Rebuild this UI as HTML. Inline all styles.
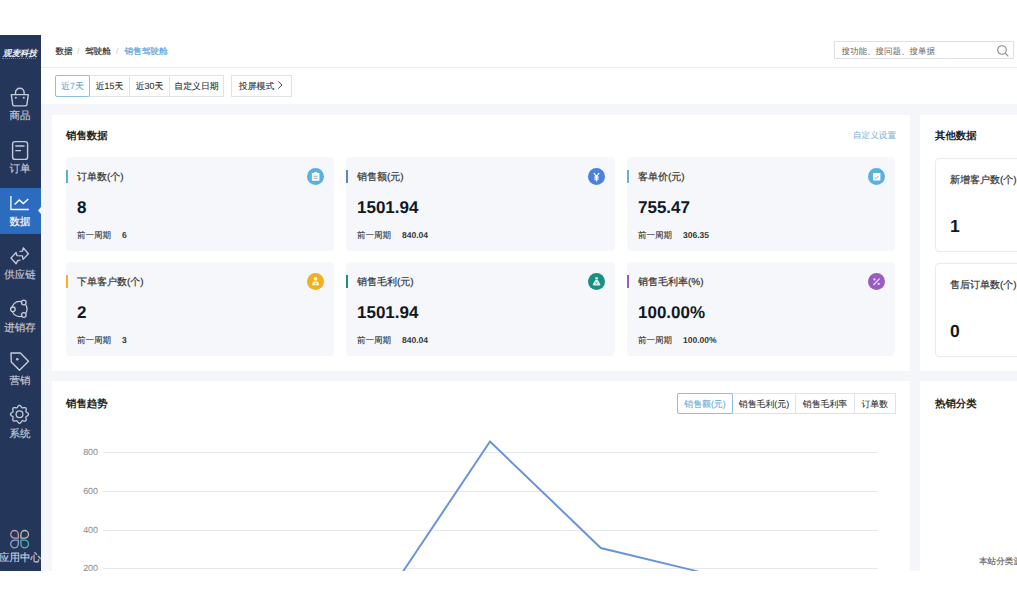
<!DOCTYPE html>
<html><head><meta charset="utf-8">
<style>
*{box-sizing:border-box;margin:0;padding:0}
html,body{width:1017px;height:606px;overflow:hidden;background:#fff;font-family:"Liberation Sans",sans-serif;color:#333;text-rendering:geometricPrecision}
body{position:relative}
div,span,svg{position:absolute}
.t{white-space:nowrap}
.sk{-webkit-text-stroke:0.2px currentColor}
#bg{left:41px;top:35px;width:976px;height:536px;background:#f4f6f9}
#side{left:0;top:35px;width:41px;height:535.5px;background:#243659}
.nav{left:-0.5px;width:41px;text-align:center;color:#c5cbd8;font-size:10.5px;line-height:12px;-webkit-text-stroke:0.15px currentColor}
#hdr{left:41px;top:35px;width:976px;height:33px;background:#fff;border-bottom:1px solid #ebedf0}
#bar{left:41px;top:68px;width:976px;height:36px;background:#fff}
.card{background:#fff}
.stat{background:#f6f7fa;border-radius:4px;height:94px}
.stat .b{left:0;top:12.5px;width:2px;height:13px}
.stat .l{left:11px;top:14px;font-size:10px;line-height:13px;color:#333;-webkit-text-stroke:0.2px #333}
.stat .v{left:11px;top:41px;font-size:17px;line-height:20px;font-weight:bold;color:#111827}
.stat .p{left:11px;top:71.5px;font-size:8.5px;line-height:12px;color:#333;-webkit-text-stroke:0.12px #333}
.stat .pv{left:56px;top:71.5px;font-size:8.5px;line-height:12px;color:#333;font-weight:bold}
.stat .ic{right:10px;top:11px;width:17px;height:17px;border-radius:50%}
.ttl{font-size:10.4px;font-weight:bold;color:#222;line-height:13px}
.btn{height:21px;border:1px solid #dfe2e8;background:#fff;font-size:8.9px;line-height:20px;text-align:center;color:#333;-webkit-text-stroke:0.1px currentColor}
.ocard{background:#fff;border:1px solid #e8eaee;border-radius:4px;height:93.5px;width:100px}
.ocard .l{left:14px;top:15px;font-size:10px;line-height:13px;color:#333;-webkit-text-stroke:0.2px #333}
.ocard .v{left:14px;top:57px;font-size:17.5px;line-height:20px;font-weight:bold;color:#111827}
.yl{font-size:8.9px;color:#888;line-height:10px;text-align:right;width:40px;left:58px}
.gl{left:103px;width:775px;height:1px;background:#e6e8eb}
</style></head><body>
<div id="bg"></div>
<div id="side">
 <div class="t" style="left:0px;top:12.5px;width:40px;text-align:center;color:#e8ecf3;font-size:8.6px;line-height:11px;font-style:italic;font-weight:bold;letter-spacing:0px">观麦科技</div>
 <div style="left:1.5px;top:22.5px;width:34px;height:1px;border-top:1px dotted #6f7c98"></div>
 <svg style="left:0;top:50px" width="41" height="28" viewBox="0 0 41 28">
  <g fill="none" stroke="#c5cbd8" stroke-width="1.4" stroke-linejoin="round">
   <path d="M15.5 9.5 V7.5 a4.3 4.3 0 0 1 8.6 0 V9.5"/>
   <path d="M11.3 9.6 H28.3 L26.9 19.6 a1.6 1.6 0 0 1 -1.6 1.3 H14.3 a1.6 1.6 0 0 1 -1.6 -1.3 Z"/>
  </g>
  <circle cx="15.8" cy="12.8" r="1" fill="#c5cbd8"/><circle cx="23.8" cy="12.8" r="1" fill="#c5cbd8"/>
 </svg>
 <div class="nav t" style="top:75px">商品</div>
 <svg style="left:0;top:104px" width="41" height="24" viewBox="0 0 41 24">
  <g fill="none" stroke="#c5cbd8" stroke-width="1.4">
   <rect x="12.6" y="2.6" width="15" height="17.8" rx="2.5"/>
   <path d="M15.3 7 H24.5 M15.3 11.6 H21"/>
  </g>
 </svg>
 <div class="nav t" style="top:127.5px">订单</div>
 <div style="left:0;top:153px;width:41px;height:46px;background:#2b6cbf"></div>
 <svg style="left:0;top:153px" width="41" height="46" viewBox="0 0 41 46">
  <g fill="none" stroke="#fff" stroke-width="1.3">
   <path d="M10.9 8 V21.5 H28.8"/>
   <path d="M14.6 16.5 L19.3 12 L23.3 15.6 L28.3 11"/>
  </g>
  <path d="M41 19 L38 22.5 L41 26 Z" fill="#fff"/>
 </svg>
 <div class="nav t" style="top:180.5px;color:#fff">数据</div>
 <svg style="left:0;top:205px" width="41" height="28" viewBox="0 0 41 28">
  <path d="M20 11.3 L22.5 11.1 L23.2 7.8 L28.4 13.7 L23 19.4 L22.5 15.9 L16.9 15.7 L16.1 12.5 L11 18 L16.1 23.8 L17.7 20.6 L19.9 20.2" fill="none" stroke="#c5cbd8" stroke-width="1.3" stroke-linejoin="round" stroke-linecap="round"/>
 </svg>
 <div class="nav t" style="top:233.5px">供应链</div>
 <svg style="left:0;top:258px" width="41" height="28" viewBox="0 0 41 28">
  <g fill="none" stroke="#c5cbd8" stroke-width="1.3">
   <circle cx="19.5" cy="16" r="7.6"/>
  </g>
  <g fill="#243659" stroke="#c5cbd8" stroke-width="1.3">
   <circle cx="23.8" cy="9.5" r="2.3"/><circle cx="12.9" cy="16.3" r="2.3"/><circle cx="23.8" cy="22" r="2.3"/>
  </g>
 </svg>
 <div class="nav t" style="top:286.5px">进销存</div>
 <svg style="left:0;top:312px" width="41" height="28" viewBox="0 0 41 28">
  <g fill="none" stroke="#c5cbd8" stroke-width="1.4" stroke-linejoin="round">
   <path d="M11 6 H20.3 L28.5 14.3 L19.5 23.2 L11.3 15 Z"/>
  </g>
  <circle cx="17.3" cy="12.3" r="1.2" fill="#c5cbd8"/>
 </svg>
 <div class="nav t" style="top:340px">营销</div>
 <svg style="left:0;top:365px" width="41" height="28" viewBox="0 0 41 28">
  <g fill="none" stroke="#c5cbd8" stroke-width="1.3">
   <path d="M28.50 14.30 L28.44 14.65 L28.28 14.99 L28.03 15.31 L27.71 15.60 L27.35 15.86 L26.98 16.10 L26.63 16.31 L26.34 16.52 L26.11 16.74 L25.97 16.98 L25.90 17.25 L25.91 17.56 L25.97 17.92 L26.06 18.32 L26.15 18.74 L26.22 19.18 L26.24 19.62 L26.20 20.02 L26.07 20.38 L25.86 20.66 L25.58 20.87 L25.22 21.00 L24.82 21.04 L24.38 21.02 L23.94 20.95 L23.52 20.86 L23.12 20.77 L22.76 20.71 L22.45 20.70 L22.18 20.77 L21.94 20.91 L21.72 21.14 L21.51 21.43 L21.30 21.78 L21.06 22.15 L20.80 22.51 L20.51 22.83 L20.19 23.08 L19.85 23.24 L19.50 23.30 L19.15 23.24 L18.81 23.08 L18.49 22.83 L18.20 22.51 L17.94 22.15 L17.70 21.78 L17.49 21.43 L17.28 21.14 L17.06 20.91 L16.82 20.77 L16.55 20.70 L16.24 20.71 L15.88 20.77 L15.48 20.86 L15.06 20.95 L14.62 21.02 L14.18 21.04 L13.78 21.00 L13.42 20.87 L13.14 20.66 L12.93 20.38 L12.80 20.02 L12.76 19.62 L12.78 19.18 L12.85 18.74 L12.94 18.32 L13.03 17.92 L13.09 17.56 L13.10 17.25 L13.03 16.98 L12.89 16.74 L12.66 16.52 L12.37 16.31 L12.02 16.10 L11.65 15.86 L11.29 15.60 L10.97 15.31 L10.72 14.99 L10.56 14.65 L10.50 14.30 L10.56 13.95 L10.72 13.61 L10.97 13.29 L11.29 13.00 L11.65 12.74 L12.02 12.50 L12.37 12.29 L12.66 12.08 L12.89 11.86 L13.03 11.62 L13.10 11.35 L13.09 11.04 L13.03 10.68 L12.94 10.28 L12.85 9.86 L12.78 9.42 L12.76 8.98 L12.80 8.58 L12.93 8.22 L13.14 7.94 L13.42 7.73 L13.78 7.60 L14.18 7.56 L14.62 7.58 L15.06 7.65 L15.48 7.74 L15.88 7.83 L16.24 7.89 L16.55 7.90 L16.82 7.83 L17.06 7.69 L17.28 7.46 L17.49 7.17 L17.70 6.82 L17.94 6.45 L18.20 6.09 L18.49 5.77 L18.81 5.52 L19.15 5.36 L19.50 5.30 L19.85 5.36 L20.19 5.52 L20.51 5.77 L20.80 6.09 L21.06 6.45 L21.30 6.82 L21.51 7.17 L21.72 7.46 L21.94 7.69 L22.18 7.83 L22.45 7.90 L22.76 7.89 L23.12 7.83 L23.52 7.74 L23.94 7.65 L24.38 7.58 L24.82 7.56 L25.22 7.60 L25.58 7.73 L25.86 7.94 L26.07 8.22 L26.20 8.58 L26.24 8.98 L26.22 9.42 L26.15 9.86 L26.06 10.28 L25.97 10.68 L25.91 11.04 L25.90 11.35 L25.97 11.62 L26.11 11.86 L26.34 12.08 L26.63 12.29 L26.98 12.50 L27.35 12.74 L27.71 13.00 L28.03 13.29 L28.28 13.61 L28.44 13.95 L28.50 14.30Z"/>
   <circle cx="19.5" cy="14.3" r="3.4"/>
  </g>
 </svg>
 <div class="nav t" style="top:393px">系统</div>
 <svg style="left:0;top:490px" width="41" height="28" viewBox="0 0 41 28">
  <g fill="none" stroke-width="1.3" stroke-linejoin="round">
   <path d="M18.30 9.30 A3.8 3.8 0 1 0 14.50 13.10 L18.30 13.10 Z" stroke="#c49aa8"/>
   <path d="M20.90 9.30 A3.8 3.8 0 1 1 24.70 13.10 L20.90 13.10 Z" stroke="#b9c0ad"/>
   <path d="M18.30 19.00 A3.8 3.8 0 1 1 14.50 15.20 L18.30 15.20 Z" stroke="#8aa6d8"/>
   <path d="M20.90 19.00 A3.8 3.8 0 1 0 24.70 15.20 L20.90 15.20 Z" stroke="#56b6b4"/>
  </g>
 </svg>
 <div class="nav t" style="top:517px;left:-3.5px;width:47px;color:#d0d5e0">应用中心</div>
</div>
<div id="hdr">
 <div class="t sk" style="left:14.5px;top:10px;font-size:8.6px;line-height:12px;color:#333">数据</div>
 <div class="t" style="left:36px;top:10px;font-size:8.6px;line-height:12px;color:#c8ccd2">/</div>
 <div class="t sk" style="left:44px;top:10px;font-size:8.6px;line-height:12px;color:#333">驾驶舱</div>
 <div class="t" style="left:75px;top:10px;font-size:8.6px;line-height:12px;color:#c8ccd2">/</div>
 <div class="t sk" style="left:83.5px;top:10px;font-size:8.6px;line-height:12px;color:#62a3d8">销售驾驶舱</div>
 <div style="left:793px;top:6px;width:179.5px;height:18px;border:1px solid #dcdfe6;background:#fff"></div>
 <div class="t" style="left:800.5px;top:9.5px;font-size:8.5px;line-height:12px;color:#666">搜功能、搜问题、搜单据</div>
 <svg style="left:955px;top:8.5px" width="14" height="14" viewBox="0 0 14 14"><g fill="none" stroke="#888" stroke-width="1.1"><circle cx="6" cy="6" r="4.3"/><path d="M9.2 9.2 L12.3 12.3"/></g></svg>
</div>
<div id="bar">
 <div class="btn t" style="left:14px;top:7px;height:21.5px;line-height:20px;width:35px;border-color:#8cbfdf;color:#6ea8d4;z-index:2;border-radius:2px">近7天</div>
 <div class="btn t" style="left:48px;top:7px;height:21.5px;line-height:20px;width:41px">近15天</div>
 <div class="btn t" style="left:88px;top:7px;height:21.5px;line-height:20px;width:41px">近30天</div>
 <div class="btn t" style="left:128px;top:7px;height:21.5px;line-height:20px;width:55px">自定义日期</div>
 <div class="btn t" style="left:190px;top:7px;height:21.5px;line-height:20px;width:61px"><span style="position:static;margin-right:10px">投屏模式</span><svg style="left:44px;top:4px" width="8" height="10" viewBox="0 0 8 10"><path d="M2.3 1.5 L6 5 L2.3 8.5" fill="none" stroke="#444" stroke-width="1"/></svg></div>
</div>

<!-- main card -->
<div class="card" style="left:52px;top:115px;width:858px;height:255.5px"></div>
<div class="card" style="left:920px;top:115px;width:120px;height:255.5px"></div>
<div class="card" style="left:52px;top:381px;width:858px;height:230px"></div>
<div class="card" style="left:920px;top:381px;width:120px;height:230px"></div>

<div class="ttl t" style="left:66px;top:129.5px">销售数据</div>
<div class="t" style="left:853px;top:128.5px;font-size:8.6px;line-height:12px;color:#78acd0">自定义设置</div>

<div class="stat" style="left:66px;top:157px;width:268px">
 <div class="b" style="background:#5ab0dc"></div>
 <div class="l t">订单数(个)</div>
 <div class="v t">8</div>
 <div class="p t">前一周期</div><div class="pv t">6</div>
 <div class="ic" style="background:#5ab0e0"><svg style="left:0;top:0" width="17" height="17" viewBox="0 0 17 17"><rect x="4.9" y="4.9" width="7.5" height="7.9" rx="0.6" fill="#fff"/><rect x="7.1" y="4" width="3.1" height="1.5" rx="0.4" fill="#fff"/><path d="M6.6 8.2 H10.7 M6.6 10.3 H10.7" stroke="#8aa4b4" stroke-width="0.9"/></svg></div>
</div>
<div class="stat" style="left:346px;top:157px;width:269px">
 <div class="b" style="background:#5a84c8"></div>
 <div class="l t">销售额(元)</div>
 <div class="v t">1501.94</div>
 <div class="p t">前一周期</div><div class="pv t">840.04</div>
 <div class="ic" style="background:#4a80e0"><svg style="left:0;top:0" width="17" height="17" viewBox="0 0 17 17"><path d="M5.9 5 L8.5 8.6 L11.1 5 M8.5 8.6 V13.4 M6.3 9.2 H10.7 M6.3 11.2 H10.7" fill="none" stroke="#fff" stroke-width="1.25"/></svg></div>
</div>
<div class="stat" style="left:627px;top:157px;width:268px">
 <div class="b" style="background:#6ab0d0"></div>
 <div class="l t">客单价(元)</div>
 <div class="v t">755.47</div>
 <div class="p t">前一周期</div><div class="pv t">306.35</div>
 <div class="ic" style="background:#5ab0e0"><svg style="left:0;top:0" width="17" height="17" viewBox="0 0 17 17"><rect x="5" y="5" width="7.4" height="7.4" rx="0.6" fill="#fff"/><path d="M6.8 9.6 L8 10.7 L10.5 7.9" fill="none" stroke="#8aa4b0" stroke-width="0.9"/></svg></div>
</div>
<div class="stat" style="left:66px;top:262px;width:268px">
 <div class="b" style="background:#f0b323"></div>
 <div class="l t">下单客户数(个)</div>
 <div class="v t">2</div>
 <div class="p t">前一周期</div><div class="pv t">3</div>
 <div class="ic" style="background:#f0b020"><svg style="left:0;top:0" width="17" height="17" viewBox="0 0 17 17"><circle cx="8.6" cy="5.9" r="1.8" fill="#fff3c8"/><path d="M4.9 12.3 L5.8 9.4 Q6.3 8.6 7.3 8.6 H9.9 Q10.9 8.6 11.4 9.4 L12.3 12.3 Z" fill="#fff3c8"/><path d="M7.8 10.6 H9.4" stroke="#c0a050" stroke-width="0.7"/></svg></div>
</div>
<div class="stat" style="left:346px;top:262px;width:269px">
 <div class="b" style="background:#1a9080"></div>
 <div class="l t">销售毛利(元)</div>
 <div class="v t">1501.94</div>
 <div class="p t">前一周期</div><div class="pv t">840.04</div>
 <div class="ic" style="background:#1a9080"><svg style="left:0;top:0" width="17" height="17" viewBox="0 0 17 17"><rect x="7.2" y="4.2" width="2.8" height="1.8" rx="0.4" fill="#d8f4ee"/><path d="M7.6 6.4 H9.6 L12.4 11.6 Q12.6 12.6 11.6 12.6 H5.6 Q4.6 12.6 4.8 11.6 Z" fill="#d8f4ee"/><path d="M7.6 9.4 L9.4 11 M9.4 9.4 L7.6 11" stroke="#508878" stroke-width="0.7"/></svg></div>
</div>
<div class="stat" style="left:627px;top:262px;width:268px">
 <div class="b" style="background:#9a5cc0"></div>
 <div class="l t">销售毛利率(%)</div>
 <div class="v t">100.00%</div>
 <div class="p t">前一周期</div><div class="pv t">100.00%</div>
 <div class="ic" style="background:#9a5cc0"><svg style="left:0;top:0" width="17" height="17" viewBox="0 0 17 17"><circle cx="6.4" cy="6.4" r="1.1" fill="#f4e0ff"/><circle cx="10.6" cy="10.9" r="1.1" fill="#f4e0ff"/><path d="M11.6 5.6 L5.4 12" stroke="#f4e0ff" stroke-width="1.1"/></svg></div>
</div>

<div class="ttl t" style="left:935px;top:129.5px">其他数据</div>
<div class="ocard" style="left:935px;top:158px"><div class="l t">新增客户数(个)</div><div class="v t">1</div></div>
<div class="ocard" style="left:935px;top:263px"><div class="l t">售后订单数(个)</div><div class="v t">0</div></div>

<div class="ttl t" style="left:66px;top:398px">销售趋势</div>
<div class="ttl t" style="left:935px;top:398px">热销分类</div>
<div class="t sk" style="left:979px;top:554.5px;font-size:8.6px;line-height:12px;color:#666">本站分类源</div>

<div class="btn t" style="left:677px;top:392.5px;height:21.5px;width:56px;border-color:#8cbfdf;color:#6ea8d4;z-index:2;border-radius:2px">销售额(元)</div>
<div class="btn t" style="left:732px;top:392.5px;height:21.5px;width:64px">销售毛利(元)</div>
<div class="btn t" style="left:795px;top:392.5px;height:21.5px;width:60px">销售毛利率</div>
<div class="btn t" style="left:854px;top:392.5px;height:21.5px;width:41.5px">订单数</div>
<div class="yl" style="top:447px">800</div>
<div class="yl" style="top:486px">600</div>
<div class="yl" style="top:525px">400</div>
<div class="yl" style="top:563px">200</div>
<div class="gl" style="top:452px"></div>
<div class="gl" style="top:491px"></div>
<div class="gl" style="top:530px"></div>
<div class="gl" style="top:568px"></div>
<svg style="left:0;top:0" width="1017" height="606"><polyline points="340,665 404.2,569.8 490,441.5 600.8,548 693.6,570.4 800,600" fill="none" stroke="#6a94d8" stroke-width="2" stroke-linejoin="miter"/></svg>

<!-- white letterbox -->
<div style="left:0;top:0;width:1017px;height:35px;background:#fff"></div>
<div style="left:0;top:571px;width:1017px;height:35px;background:#fff"></div>
</body></html>
